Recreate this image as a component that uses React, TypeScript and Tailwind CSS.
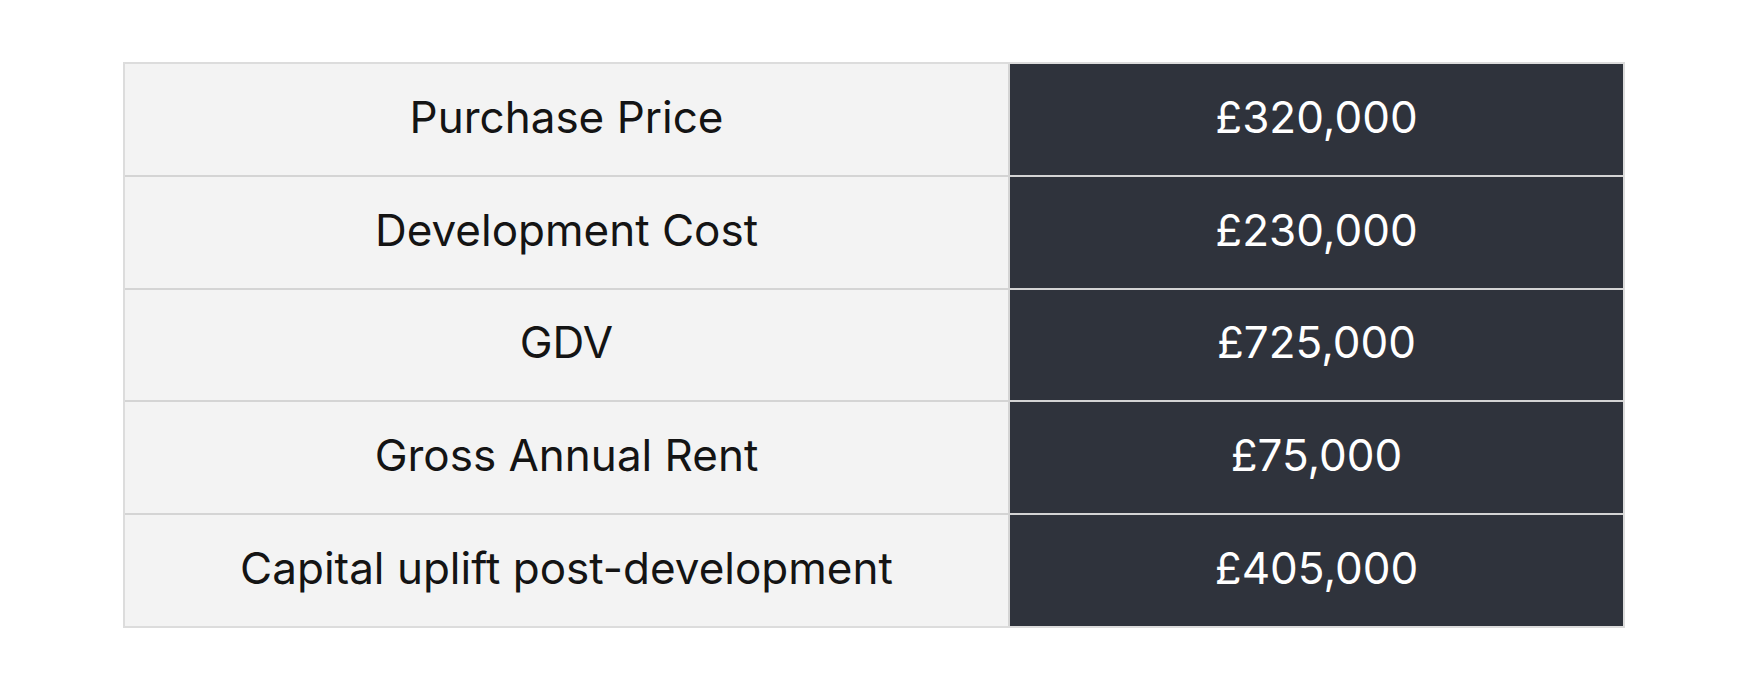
import React from "react";

const ROWS = [
  { label: "Purchase Price", value: "£320,000" },
  { label: "Development Cost", value: "£230,000" },
  { label: "GDV", value: "£725,000" },
  { label: "Gross Annual Rent", value: "£75,000" },
  { label: "Capital uplift post-development", value: "£405,000" },
];

export default function App() {
  return (
    <div className="min-h-[695px] w-full bg-white pl-[123px] pt-[62px] font-['Inter','Noto_Sans',sans-serif]">
      {/* summary table */}
      <div className="grid w-[1502px] grid-cols-[883px_1fr] gap-[2px] border-2 border-[#dcdcdc] bg-[#d4d4d4]">
        {ROWS.map((row) => (
          <React.Fragment key={row.label}>
            <div className="flex h-[110.8px] items-center justify-center bg-[#f3f3f3] pb-[5px] text-[44px] text-[#141414]">
              {row.label}
            </div>
            <div className="flex h-[110.8px] items-center justify-center bg-[#2f333c] pb-[5px] text-[44px] text-white">
              {row.value}
            </div>
          </React.Fragment>
        ))}
      </div>
    </div>
  );
}
